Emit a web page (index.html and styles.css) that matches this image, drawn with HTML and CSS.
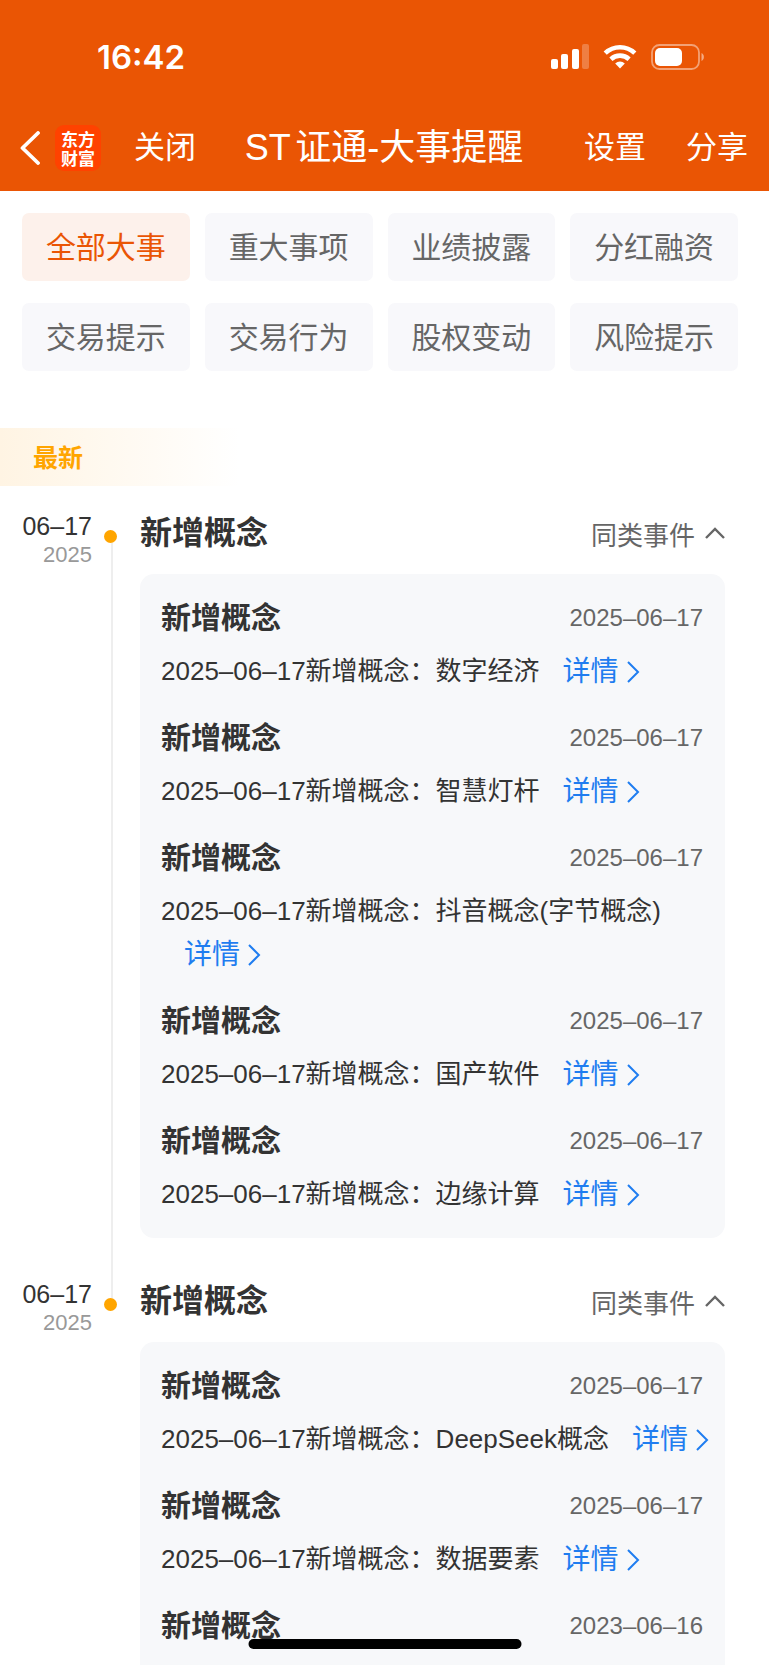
FILE: index.html
```html
<!DOCTYPE html>
<html lang="zh-CN">
<head>
    <meta charset="UTF-8">
    <meta name="viewport" content="width=device-width, initial-scale=1.0">
    <title>ST证通-大事提醒</title>
    <link rel="stylesheet" href="styles.css">
</head>
<body>
    <header>
        <div class="status-bar">
            <span class="time">16:42</span>
            <div class="status-icons">
                <svg width="38" height="26" viewBox="0 0 38 26" fill="#fff">
                    <rect x="0" y="15" width="7" height="10" rx="2"/>
                    <rect x="10" y="10" width="7" height="15" rx="2"/>
                    <rect x="21" y="5" width="7" height="20" rx="2"/>
                    <rect x="31" y="0" width="7" height="25" rx="2" opacity="0.25"/>
                </svg>
                <svg width="34" height="26" viewBox="0 0 34 26" fill="none" stroke="#fff" stroke-width="4.6">
                    <path d="M2.2 9.2a21.5 21.5 0 0 1 29.6 0"/>
                    <path d="M7.9 15.2a13.4 13.4 0 0 1 18.2 0"/>
                    <path d="M12.2 19.4a7.2 7.2 0 0 1 9.6 0L17 24.6z" fill="#fff" stroke="none"/>
                </svg>
                <svg width="54" height="26" viewBox="0 0 54 26">
                    <rect x="1" y="1" width="47" height="24" rx="7.5" fill="none" stroke="#fff" stroke-opacity="0.45" stroke-width="1.8"/>
                    <rect x="4" y="4" width="27" height="18" rx="5" fill="#fff"/>
                    <path d="M50.5 9v8c3.2-1.4 3.2-6.600 0-8z" fill="#fff" opacity="0.5"/>
                </svg>
            </div>
        </div>
        <nav>
            <div class="nav-left">
                <button class="back" aria-label="返回">
                    <svg width="20" height="34" viewBox="0 0 20 34" fill="none" stroke="#fff" stroke-width="3.8" stroke-linecap="round" stroke-linejoin="round"><path d="M18 2L2.500 17L18 32"/></svg>
                </button>
                <div class="logo"><span>东方</span><span>财富</span></div>
                <button>关闭</button>
            </div>
            <h1>ST证通-大事提醒</h1>
            <div class="nav-right">
                <button>设置</button>
                <button>分享</button>
            </div>
        </nav>
    </header>

    <main>
        <div class="filters">
            <button class="active">全部大事</button>
            <button>重大事项</button>
            <button>业绩披露</button>
            <button>分红融资</button>
            <button>交易提示</button>
            <button>交易行为</button>
            <button>股权变动</button>
            <button>风险提示</button>
        </div>

        <div class="latest">最新</div>

        <section class="event">
            <div class="date">06–17<span class="year">2025</span></div>
            <div class="rail"><i class="line-top"></i><i class="dot"></i><i class="line"></i></div>
            <div class="content">
                <div class="event-head">
                    <h2>新增概念</h2>
                    <button class="toggle">同类事件 <svg width="20" height="12" viewBox="0 0 20 12"><path d="M1 11L10 2L19 11"/></svg></button>
                </div>
                <div class="card">
                    <article>
                        <div class="row"><h3>新增概念</h3><time>2025–06–17</time></div>
                        <p>2025–06–17新增概念：数字经济<a href="#">详情<svg width="13" height="22" viewBox="0 0 13 22"><path d="M1 1L11 11L1 21"/></svg></a></p>
                    </article>
                    <article>
                        <div class="row"><h3>新增概念</h3><time>2025–06–17</time></div>
                        <p>2025–06–17新增概念：智慧灯杆<a href="#">详情<svg width="13" height="22" viewBox="0 0 13 22"><path d="M1 1L11 11L1 21"/></svg></a></p>
                    </article>
                    <article>
                        <div class="row"><h3>新增概念</h3><time>2025–06–17</time></div>
                        <p>2025–06–17新增概念：抖音概念(字节概念)<a href="#">详情<svg width="13" height="22" viewBox="0 0 13 22"><path d="M1 1L11 11L1 21"/></svg></a></p>
                    </article>
                    <article>
                        <div class="row"><h3>新增概念</h3><time>2025–06–17</time></div>
                        <p>2025–06–17新增概念：国产软件<a href="#">详情<svg width="13" height="22" viewBox="0 0 13 22"><path d="M1 1L11 11L1 21"/></svg></a></p>
                    </article>
                    <article>
                        <div class="row"><h3>新增概念</h3><time>2025–06–17</time></div>
                        <p>2025–06–17新增概念：边缘计算<a href="#">详情<svg width="13" height="22" viewBox="0 0 13 22"><path d="M1 1L11 11L1 21"/></svg></a></p>
                    </article>
                </div>
            </div>
        </section>

        <section class="event">
            <div class="date">06–17<span class="year">2025</span></div>
            <div class="rail"><i class="line-top"></i><i class="dot"></i><i class="line"></i></div>
            <div class="content">
                <div class="event-head">
                    <h2>新增概念</h2>
                    <button class="toggle">同类事件 <svg width="20" height="12" viewBox="0 0 20 12"><path d="M1 11L10 2L19 11"/></svg></button>
                </div>
                <div class="card">
                    <article>
                        <div class="row"><h3>新增概念</h3><time>2025–06–17</time></div>
                        <p>2025–06–17新增概念：DeepSeek概念<a href="#">详情<svg width="13" height="22" viewBox="0 0 13 22"><path d="M1 1L11 11L1 21"/></svg></a></p>
                    </article>
                    <article>
                        <div class="row"><h3>新增概念</h3><time>2025–06–17</time></div>
                        <p>2025–06–17新增概念：数据要素<a href="#">详情<svg width="13" height="22" viewBox="0 0 13 22"><path d="M1 1L11 11L1 21"/></svg></a></p>
                    </article>
                    <article>
                        <div class="row"><h3>新增概念</h3><time>2023–06–16</time></div>
                    </article>
                </div>
            </div>
        </section>
    </main>
    <div class="home-bar"></div>
</body>
</html>
```

FILE: styles.css
```css
* {
    box-sizing: border-box;
    margin: 0;
    padding: 0;
}
body {
    height: 100vh;
    display: flex;
    flex-direction: column;
    overflow: hidden;
    background-color: #fff;
    color: #333;
    font-family: "Liberation Sans", "Noto Sans CJK SC", sans-serif;
}
button {
    border: none;
    background: none;
    color: inherit;
    font-family: inherit;
    cursor: pointer;
}
svg {
    display: block;
    flex: none;
}

/* header */
header {
    flex: none;
    background-color: #ea5504;
    color: #fff;
}
.status-bar {
    height: 105px;
    padding: 9px 64px 0 97px;
    display: flex;
    align-items: center;
    justify-content: space-between;
}
.time {
    font-family: Inter, sans-serif;
    font-size: 33px;
    font-weight: 600;
}
.status-icons {
    display: flex;
    align-items: center;
    gap: 14px;
}
nav {
    height: 86px;
    padding: 0 21px 0 20px;
    display: grid;
    grid-template-columns: 1fr auto 1fr;
    align-items: center;
}
nav button {
    font-size: 31px;
    line-height: 44px;
}
.nav-left {
    display: flex;
    align-items: center;
}
.logo {
    width: 46px;
    height: 46px;
    margin: 0 33px 0 15px;
    display: flex;
    flex-direction: column;
    align-items: center;
    justify-content: center;
    border-radius: 9px;
    background-color: #ff4200;
    font-family: "Noto Sans CJK SC", sans-serif;
    font-size: 17px;
    font-weight: bold;
    line-height: 19px;
}
nav h1 {
    font-size: 36px;
    font-weight: normal;
    line-height: 48px;
    white-space: nowrap;
    text-autospace: normal;
}
.nav-right {
    display: flex;
    justify-content: flex-end;
    gap: 40px;
}

/* filter buttons */
main {
    flex: 1;
    overflow-y: auto;
    scrollbar-width: none;
}
.filters {
    padding: 22px 31px 0 22px;
    display: grid;
    grid-template-columns: repeat(4, 1fr);
    gap: 22px 15px;
}
.filters button {
    height: 68px;
    padding-bottom: 5px;
    border-radius: 7px;
    background-color: #f8f8fb;
    color: #666;
    font-size: 30px;
}
.filters .active {
    background-color: #fdf1eb;
    color: #ea5504;
}
.latest {
    width: 240px;
    height: 58px;
    margin: 57px 0 24px;
    padding-left: 33px;
    background: linear-gradient(90deg, #fff4e3, #fff);
    color: #ffa500;
    font-size: 25px;
    font-weight: bold;
    line-height: 60px;
}

/* timeline */
.event {
    display: grid;
    grid-template-columns: 92px 48px 1fr;
    padding-right: 44px;
}
.date {
    font-size: 25px;
    line-height: 32px;
    text-align: right;
}
.year {
    display: block;
    color: #999;
    font-size: 22px;
    line-height: 26px;
}
.rail {
    display: flex;
    flex-direction: column;
    padding-left: 12px;
}
.line-top, .line {
    width: 2px;
    margin-left: 7px;
    background-color: #eee;
}
.line-top {
    height: 20px;
}
.line {
    flex: 1;
}
.event:first-of-type .line-top, .event:last-of-type .line {
    background: none;
}
.dot {
    width: 13px;
    height: 13px;
    border-radius: 50%;
    background-color: #ffa500;
}
.content {
    padding-bottom: 40px;
}
.event-head {
    display: flex;
    justify-content: space-between;
    align-items: center;
    height: 46px;
    margin-bottom: 18px;
}
h2 {
    font-size: 32px;
    line-height: 46px;
}
.toggle {
    display: flex;
    align-items: center;
    gap: 10px;
    color: #666;
    font-size: 26px;
}
.toggle svg {
    fill: none;
    stroke: #666;
    stroke-width: 2.4;
}
.card {
    padding: 22px 12px 22px 21px;
    border-radius: 14px;
    background-color: #f7f8fa;
}
/* room for the home bar */
.event:last-of-type .card {
    padding-bottom: 60px;
}
article + article {
    margin-top: 23px;
}
.row {
    display: flex;
    justify-content: space-between;
    align-items: center;
    padding-right: 10px;
    margin-bottom: 10px;
}
h3 {
    font-size: 30px;
    line-height: 44px;
}
time {
    color: #666;
    font-size: 24px;
}
.card p {
    font-size: 26px;
    line-height: 43px;
}
.card a {
    display: inline-flex;
    align-items: center;
    gap: 8px;
    margin-left: 23px;
    color: #1f7df0;
    font-size: 28px;
    line-height: 43px;
    text-decoration: none;
    vertical-align: top;
}
.card a svg {
    fill: none;
    stroke: #1f7df0;
    stroke-width: 2;
}

.home-bar {
    position: fixed;
    bottom: 16px;
    left: 50%;
    width: 273px;
    height: 10px;
    border-radius: 5px;
    background-color: #000;
    transform: translateX(-50%);
}
```
